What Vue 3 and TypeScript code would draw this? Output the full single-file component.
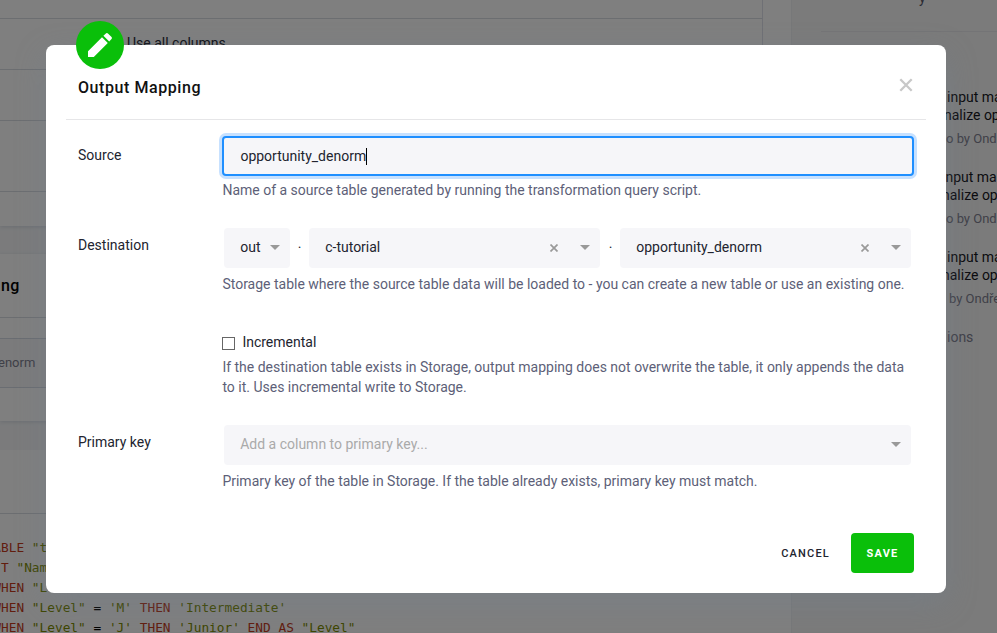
<script setup lang="ts">
import { ref } from 'vue'

interface Token {
  kind: 'keyword' | 'string' | 'plain'
  text: string
}

interface Version {
  title: string
  subtitle: string
  meta: string
  shift: string
}

const source = ref('opportunity_denorm')
const stage = ref('out')
const bucket = ref('c-tutorial')
const table = ref('opportunity_denorm')
const incremental = ref(false)

const k = (text: string): Token => ({ kind: 'keyword', text })
const s = (text: string): Token => ({ kind: 'string', text })
const p = (text: string): Token => ({ kind: 'plain', text })

const code: Token[][] = [
  [k('TABLE '), s('"t')],
  [k('  T '), s('"Nam')],
  [k(' WHEN '), s('"L')],
  [k(' WHEN '), s('"Level"'), p(' = '), s("'M'"), k(' THEN '), s("'Intermediate'")],
  [k(' WHEN '), s('"Level"'), p(' = '), s("'J'"), k(' THEN '), s("'Junior'"), k(' END AS '), s('"Level"')],
]

const versions: Version[] = [
  { title: 'input ma', subtitle: 'nalize op', meta: 'o by Ondř', shift: 'a' },
  { title: 'input ma', subtitle: 'nalize op', meta: 'o by Ondř', shift: 'b' },
  { title: 'input ma', subtitle: 'nalize op', meta: 'by Ondře', shift: 'c' },
]
</script>

<template>
  <div class="screen">
    <div class="page">
      <main class="main">
        <section class="columns">
          <div class="line-row r1"></div>
          <div class="line-row r2"><span>Use all columns</span></div>
          <div class="line-row r3"></div>
          <div class="line-row r4"></div>
        </section>
        <section class="mapping">
          <h3>ng</h3>
          <div class="mapping-row">enorm</div>
        </section>
        <section class="queries">
          <div class="queries-head"></div>
          <div class="code">
            <div v-for="(line, i) in code" :key="i" class="code-line"><span v-for="(t, j) in line" :key="j" :class="t.kind">{{ t.text }}</span></div>
          </div>
        </section>
      </main>
      <aside class="sidebar">
        <div class="side-head"><span>y</span></div>
        <div class="versions">
          <div v-for="(v, i) in versions" :key="i" class="version" :class="v.shift">
            <div class="v-title">{{ v.title }}</div>
            <div class="v-sub">{{ v.subtitle }}</div>
            <div class="v-meta">{{ v.meta }}</div>
          </div>
          <div class="v-all">ions</div>
        </div>
      </aside>
    </div>

    <div class="overlay">
      <div class="modal">
        <div class="badge">
          <svg viewBox="0 0 24 24" width="24" height="24">
            <path fill="#fff" d="M0 24V18.2L14 4.200L19.800 10L5.800 24ZM15.400 2.800L17.600 .7Q18.900-.5 20.200 .7L23.300 3.800Q24.500 5 23.300 6.300L21.200 8.600Z" />
          </svg>
        </div>
        <header class="modal-head">
          <h2>Output Mapping</h2>
          <svg class="close" viewBox="0 0 14 14" width="14" height="14">
            <path d="M1.300 1.300L12.700 12.700M12.700 1.300L1.300 12.700" stroke="#c8c8c8" stroke-width="2.300" />
          </svg>
        </header>
        <div class="form">
          <div class="row source-row">
            <label>Source</label>
            <div class="field">
              <div class="input">{{ source }}<i class="caret"></i></div>
              <p>Name of a source table generated by running the transformation query script.</p>
            </div>
          </div>
          <div class="row dest-row">
            <label>Destination</label>
            <div class="field">
              <div class="selects">
                <div class="select small"><span>{{ stage }}</span><b class="arrow"></b></div>
                <span class="dot">·</span>
                <div class="select bucket">
                  <span>{{ bucket }}</span>
                  <svg class="clear" viewBox="0 0 8 8" width="8" height="8"><path d="M.5.5l7 7M7.500.5l-7 7" stroke="#999" stroke-width="1.700" /></svg>
                  <b class="arrow"></b>
                </div>
                <span class="dot wide">·</span>
                <div class="select table">
                  <span>{{ table }}</span>
                  <svg class="clear" viewBox="0 0 8 8" width="8" height="8"><path d="M.5.5l7 7M7.500.5l-7 7" stroke="#999" stroke-width="1.700" /></svg>
                  <b class="arrow"></b>
                </div>
              </div>
              <p>Storage table where the source table data will be loaded to - you can create a new table or use an existing one.</p>
            </div>
          </div>
          <div class="row inc-row">
            <span></span>
            <div class="field">
              <div class="check" @click="incremental = !incremental"><i class="box"></i><span>Incremental</span></div>
              <p>If the destination table exists in Storage, output mapping does not overwrite the table, it only appends the data<br />to it. Uses incremental write to Storage.</p>
            </div>
          </div>
          <div class="row key-row">
            <label>Primary key</label>
            <div class="field">
              <div class="select key"><span>Add a column to primary key...</span><b class="arrow"></b></div>
              <p>Primary key of the table in Storage. If the table already exists, primary key must match.</p>
            </div>
          </div>
        </div>
        <footer class="actions">
          <button class="cancel">CANCEL</button>
          <button class="save">SAVE</button>
        </footer>
      </div>
    </div>
  </div>
</template>

<style>
body {
  margin: 0;
  overflow: hidden;
}
</style>

<style scoped>
* {
  box-sizing: border-box;
}
.screen {
  position: relative;
  width: 997px;
  height: 633px;
  overflow: hidden;
  font: 14px/20px Roboto, "Liberation Sans", sans-serif;
  color: #22242f;
}
.page {
  display: flex;
  height: 633px;
  background: #fff;
}
.main {
  width: 791px;
  overflow: hidden;
  background: #f6f7f9;
  flex: none;
}
.columns {
  height: 226px;
  background: #fff;
  box-shadow: 0 1px 4px #d5dae2;
}
.line-row {
  width: 763px;
  border-right: 1px solid #dfe1ea;
  border-bottom: 1px solid #d9dce2;
}
.r1 { height: 19px; }
.r2 { height: 51px; padding: 14px 0 0 127px; }
.r3 { height: 51px; }
.r4 { height: 71px; }
.mapping {
  height: 167px;
  margin-top: 28px;
  background: #fff;
  box-shadow: 0 1px 4px #d5dae2;
}
h3 {
  margin: 0;
  height: 64px;
  padding: 22px 0 0 1px;
  border-bottom: 1px solid #d9dce2;
  font-size: 16px;
  font-weight: 500;
  letter-spacing: 0.3px;
  color: #000;
}
.mapping-row {
  height: 50px;
  margin-top: 20px;
  padding: 14px 0 0 0;
  margin-left: -2px;
  border-top: 1px solid #d5dae4;
  border-bottom: 1px solid #d5dae4;
  background: #f6f6f9;
  color: #808090;
  font-size: 13px;
}
.queries {
  height: 183px;
  margin-top: 29px;
  background: #fff;
}
.queries-head {
  height: 64px;
  border-bottom: 1px solid #d9dce2;
}
.code {
  margin: 24px 0 0 -14.400px;
  font: 12.8px/20px "DejaVu Sans Mono", monospace;
}
.code-line { white-space: pre; }
.keyword { color: #c43a1c; }
.string { color: #7d8c00; }
.plain { color: #000; }
.sidebar {
  flex: 1;
  overflow: hidden;
  background: #f7f7f7;
  border-left: 1px solid #eff0f3;
}
.side-head {
  display: flow-root;
  height: 32px;
  margin-left: 29px;
  padding-left: 98px;
  border-bottom: 1px solid #e8e9ec;
  color: #556;
}
.side-head span {
  display: block;
  margin-top: -12px;
}
.versions {
  padding: 56px 0 0 154px;
  white-space: nowrap;
}
.version {
  height: 80px;
  line-height: 18px;
  color: #171722;
}
.v-meta {
  margin-top: 6px;
  font-size: 13px;
  color: #808090;
}
.a .v-title, .c .v-title { padding-left: 1px; }
.b .v-title { margin-left: -4px; }
.v-sub { margin-left: -2px; }
.b .v-sub, .c .v-sub { margin-left: -4px; }
.c .v-meta { padding-left: 3px; }
.v-all { padding-left: 1px; color: #808090; line-height: 18px; }
.overlay {
  position: absolute;
  inset: 0;
  padding: 45px 51px 40px 46px;
  background: rgba(0, 0, 0, 0.5);
}
.modal {
  position: relative;
  height: 548px;
  border-radius: 8px;
  background: #fff;
  box-shadow: 0 10px 30px rgba(112, 130, 145, 0.35);
}
.badge {
  position: absolute;
  left: 30px;
  top: -24px;
  display: flex;
  align-items: center;
  justify-content: center;
  width: 48px;
  height: 48px;
  border-radius: 50%;
  background: #0abf0a;
}
.modal-head {
  display: flex;
  justify-content: space-between;
  height: 75px;
  margin: 0 20px;
  padding: 32px 13px 0 12px;
  border-bottom: 1px solid #e6e6e8;
}
h2 {
  margin: 1px 0 0;
  font-size: 16px;
  line-height: 20px;
  font-weight: 500;
  letter-spacing: 0.57px;
  color: #111;
}
.close { margin-top: 0.500px; }
.form { padding: 16px 32px 0; }
.row {
  display: grid;
  grid-template-columns: 144px 692px;
}
.row label { padding-top: 9px; }
.source-row { height: 92px; }
.dest-row { height: 104px; }
.inc-row { height: 93px; }
.key-row { height: 108px; }
.input {
  display: flex;
  align-items: center;
  height: 40px;
  padding-left: 16.400px;
  border: 2px solid #1f8fff;
  border-radius: 4px;
  background: #f6f6f9;
  box-shadow: 0 0 0 3px #c7e1ff;
}
.caret {
  width: 1px;
  height: 17px;
  background: #000;
}
p {
  margin: 4px 0 0;
  padding-left: 0.4px;
  color: #5d5f78;
  white-space: nowrap;
}
.selects {
  display: flex;
  align-items: center;
  padding-left: 2px;
}
.select {
  display: flex;
  align-items: center;
  height: 40px;
  padding: 0 10px 2px 16.200px;
  border-radius: 4px;
  background: #f6f6f9;
}
.select span { flex: 1; }
.small { width: 66px; }
.bucket, .table { width: 291px; }
.dot {
  width: 19px;
  text-align: center;
}
.wide { width: 20px; padding-left: 1px; }
.dest-row label { padding-top: 7px; }
.dest-row p { margin-top: 6px; }
.clear { margin: 2px 22px 0 0; }
.arrow {
  border: 5px solid transparent;
  border-top-color: #999;
  border-bottom: 0;
}
.check {
  display: flex;
  gap: 7.400px;
  height: 20px;
}
.box {
  width: 13px;
  height: 13px;
  margin-top: 5px;
  border: 1px solid #666;
}
.inc-row p { margin-top: 5px; }
.key {
  width: 687px;
  margin-left: 2px;
  color: #aaa;
}
.key-row label { padding-top: 7px; }
.key-row p { margin-top: 6px; }
.actions {
  display: flex;
  justify-content: flex-end;
  padding-right: 32px;
}
button {
  height: 40px;
  padding: 2px 0 0;
  border: 0;
  border-radius: 4px;
  background: none;
  font: 500 11px/20px Roboto, sans-serif;
  letter-spacing: 1.2px;
  color: #22242f;
}
.cancel { margin-right: 21px; }
.save {
  width: 63px;
  background: #0abf0a;
  font-weight: 700;
  color: #fff;
}
</style>
